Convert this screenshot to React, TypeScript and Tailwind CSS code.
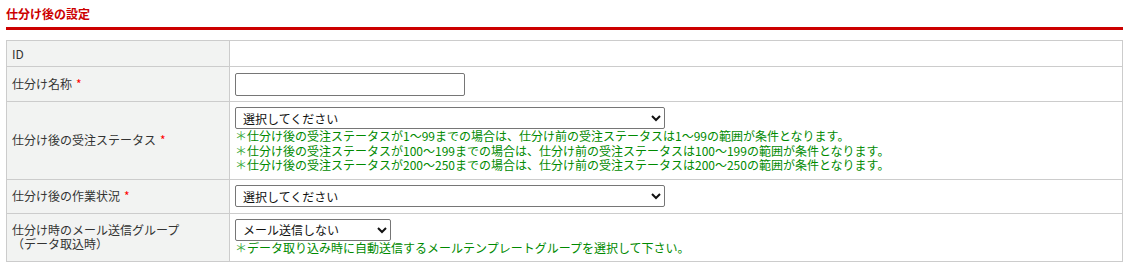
import React from "react"

const font = { fontFamily: '"Noto Sans CJK JP", "Noto Sans", sans-serif' }

function Req() {
  return <span className="ml-1 text-[#ff0000]">*</span>
}

function Note({ children }: { children: React.ReactNode }) {
  return (
    <div className="text-[12px] leading-[14.5px] text-[#008a00]">
      <span className="text-[#3caa3c]">＊</span>
      {children}
    </div>
  )
}

function Select({ width, label }: { width: string; label: string }) {
  return (
    <select
      className={`${width} h-[22px] rounded-[2px] border border-[#767676] bg-white pl-[3px] text-[12px] text-[#111]`}
      defaultValue=""
    >
      <option value="">{label}</option>
    </select>
  )
}

export default function App() {
  return (
    <div className="bg-white px-[6px] text-[12px] text-[#333]" style={font}>
      <h2 className="pt-[6px] text-[12px] font-bold leading-[16px] text-[#cc0000]">仕分け後の設定</h2>
      <div className="mt-[5px] h-[3px] w-[1117px] bg-[#cc0000]" />

      <table className="mt-[10px] w-[1117px] border-collapse">
        <tbody>
          <tr className="h-[26px]">
            <th className="w-[223px] border border-[#cccccc] bg-[#f2f3f2] pl-[5px] text-left font-normal">ID</th>
            <td className="border border-[#cccccc]"></td>
          </tr>
          <tr className="h-[35px]">
            <th className="border border-[#cccccc] bg-[#f2f3f2] pl-[5px] text-left font-normal">
              仕分け名称
              <Req />
            </th>
            <td className="border border-[#cccccc] pl-[5px]">
              <input type="text" className="block h-[23px] w-[230px] rounded-[2px] border border-[#767676] bg-white" />
            </td>
          </tr>
          <tr className="h-[77px]">
            <th className="border border-[#cccccc] bg-[#f2f3f2] pl-[5px] text-left font-normal">
              仕分け後の受注ステータス
              <Req />
            </th>
            <td className="border border-[#cccccc] pl-[5px] pb-[6px] pt-[5px] align-top">
              <Select width="w-[430px]" label="選択してください" />
              <Note>仕分け後の受注ステータスが1～99までの場合は、仕分け前の受注ステータスは1～99の範囲が条件となります。</Note>
              <Note>仕分け後の受注ステータスが100～199までの場合は、仕分け前の受注ステータスは100～199の範囲が条件となります。</Note>
              <Note>仕分け後の受注ステータスが200～250までの場合は、仕分け前の受注ステータスは200～250の範囲が条件となります。</Note>
            </td>
          </tr>
          <tr className="h-[34px]">
            <th className="border border-[#cccccc] bg-[#f2f3f2] pl-[5px] text-left font-normal">
              仕分け後の作業状況
              <Req />
            </th>
            <td className="border border-[#cccccc] pl-[5px]">
              <Select width="w-[430px]" label="選択してください" />
            </td>
          </tr>
          <tr className="h-[48px]">
            <th className="border border-[#cccccc] bg-[#f2f3f2] pl-[5px] text-left font-normal leading-[14.5px]">
              仕分け時のメール送信グループ
              <br />
              （データ取込時）
            </th>
            <td className="border border-[#cccccc] pl-[5px] pt-[5px] pb-[4px] align-top">
              <Select width="w-[156px]" label="メール送信しない" />
              <Note>データ取り込み時に自動送信するメールテンプレートグループを選択して下さい。</Note>
            </td>
          </tr>
        </tbody>
      </table>
    </div>
  )
}
